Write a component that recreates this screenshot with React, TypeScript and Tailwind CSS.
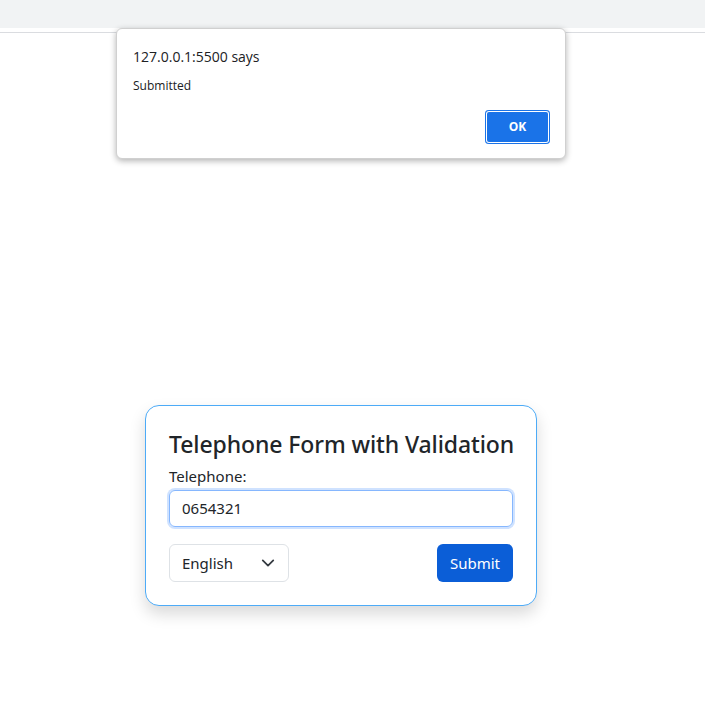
import React from "react";

export default function App() {
  return (
    <div className="relative w-[705px] h-[717px] bg-white overflow-hidden" style={{ fontFamily: '"Noto Sans", "Open Sans", sans-serif' }}>
      <div className="h-[28px] bg-[#f1f3f4]" />
      <div className="h-[5px] border-b border-[#dadce0]" />
      <div className="ml-[145px] mt-[372px] w-[392px] rounded-[14px] border border-[#4dabf7] bg-white px-[23px] pt-[22px] pb-[23px] shadow-[0_8px_16px_rgba(0,0,0,0.15)]">
        <h2 className="whitespace-nowrap text-[23px] font-medium leading-[32px] tracking-[-0.1px] text-[#212529]">Telephone Form with Validation</h2>
        <label className="mt-[6px] block text-[15px] leading-[20px] text-[#212529]">Telephone:</label>
        <div className="mt-[4px] flex h-[37px] items-center rounded-[6px] border border-[#86b7fe] px-[12px] text-[15px] text-[#212529] shadow-[0_0_0_2px_rgba(13,110,253,0.2)]">
          0654321
        </div>
        <div className="mt-[17px] flex items-center justify-between">
          <div className="flex h-[38px] w-[120px] items-center justify-between rounded-[6px] border border-[#dee2e6] pl-[12px] pr-[13px] text-[15px] text-[#212529]">
            <span>English</span>
            <svg width="14" height="14" viewBox="0 0 16 16" fill="none" stroke="#343a40" strokeWidth="2" strokeLinecap="round" strokeLinejoin="round">
              <path d="M2 5l6 6 6-6" />
            </svg>
          </div>
          <div className="flex h-[38px] w-[76px] items-center justify-center rounded-[6px] bg-[#0b5ed7] text-[15px] text-white">Submit</div>
        </div>
      </div>
      <div className="absolute left-[116px] top-[28px] h-[131px] w-[450px] rounded-[6px] border border-[#d0d0d0] bg-white shadow-[0_2px_6px_rgba(0,0,0,0.3)]" style={{ fontFamily: '"Open Sans", "Noto Sans", sans-serif' }}>
        <div className="ml-[16px] mt-[18px] text-[14px] leading-[20px] text-[#202124]">127.0.0.1:5500 says</div>
        <div className="ml-[16px] mt-[11px] text-[12px] leading-[16px] text-[#202124]">Submitted</div>
        <div className="absolute left-[368px] top-[81px] flex h-[34px] w-[65px] items-center justify-center rounded-[4px] bg-[#1a73e8] text-[12px] font-bold text-white shadow-[inset_0_0_0_1px_#1a73e8,inset_0_0_0_2px_#ffffff]">OK</div>
      </div>
    </div>
  );
}
